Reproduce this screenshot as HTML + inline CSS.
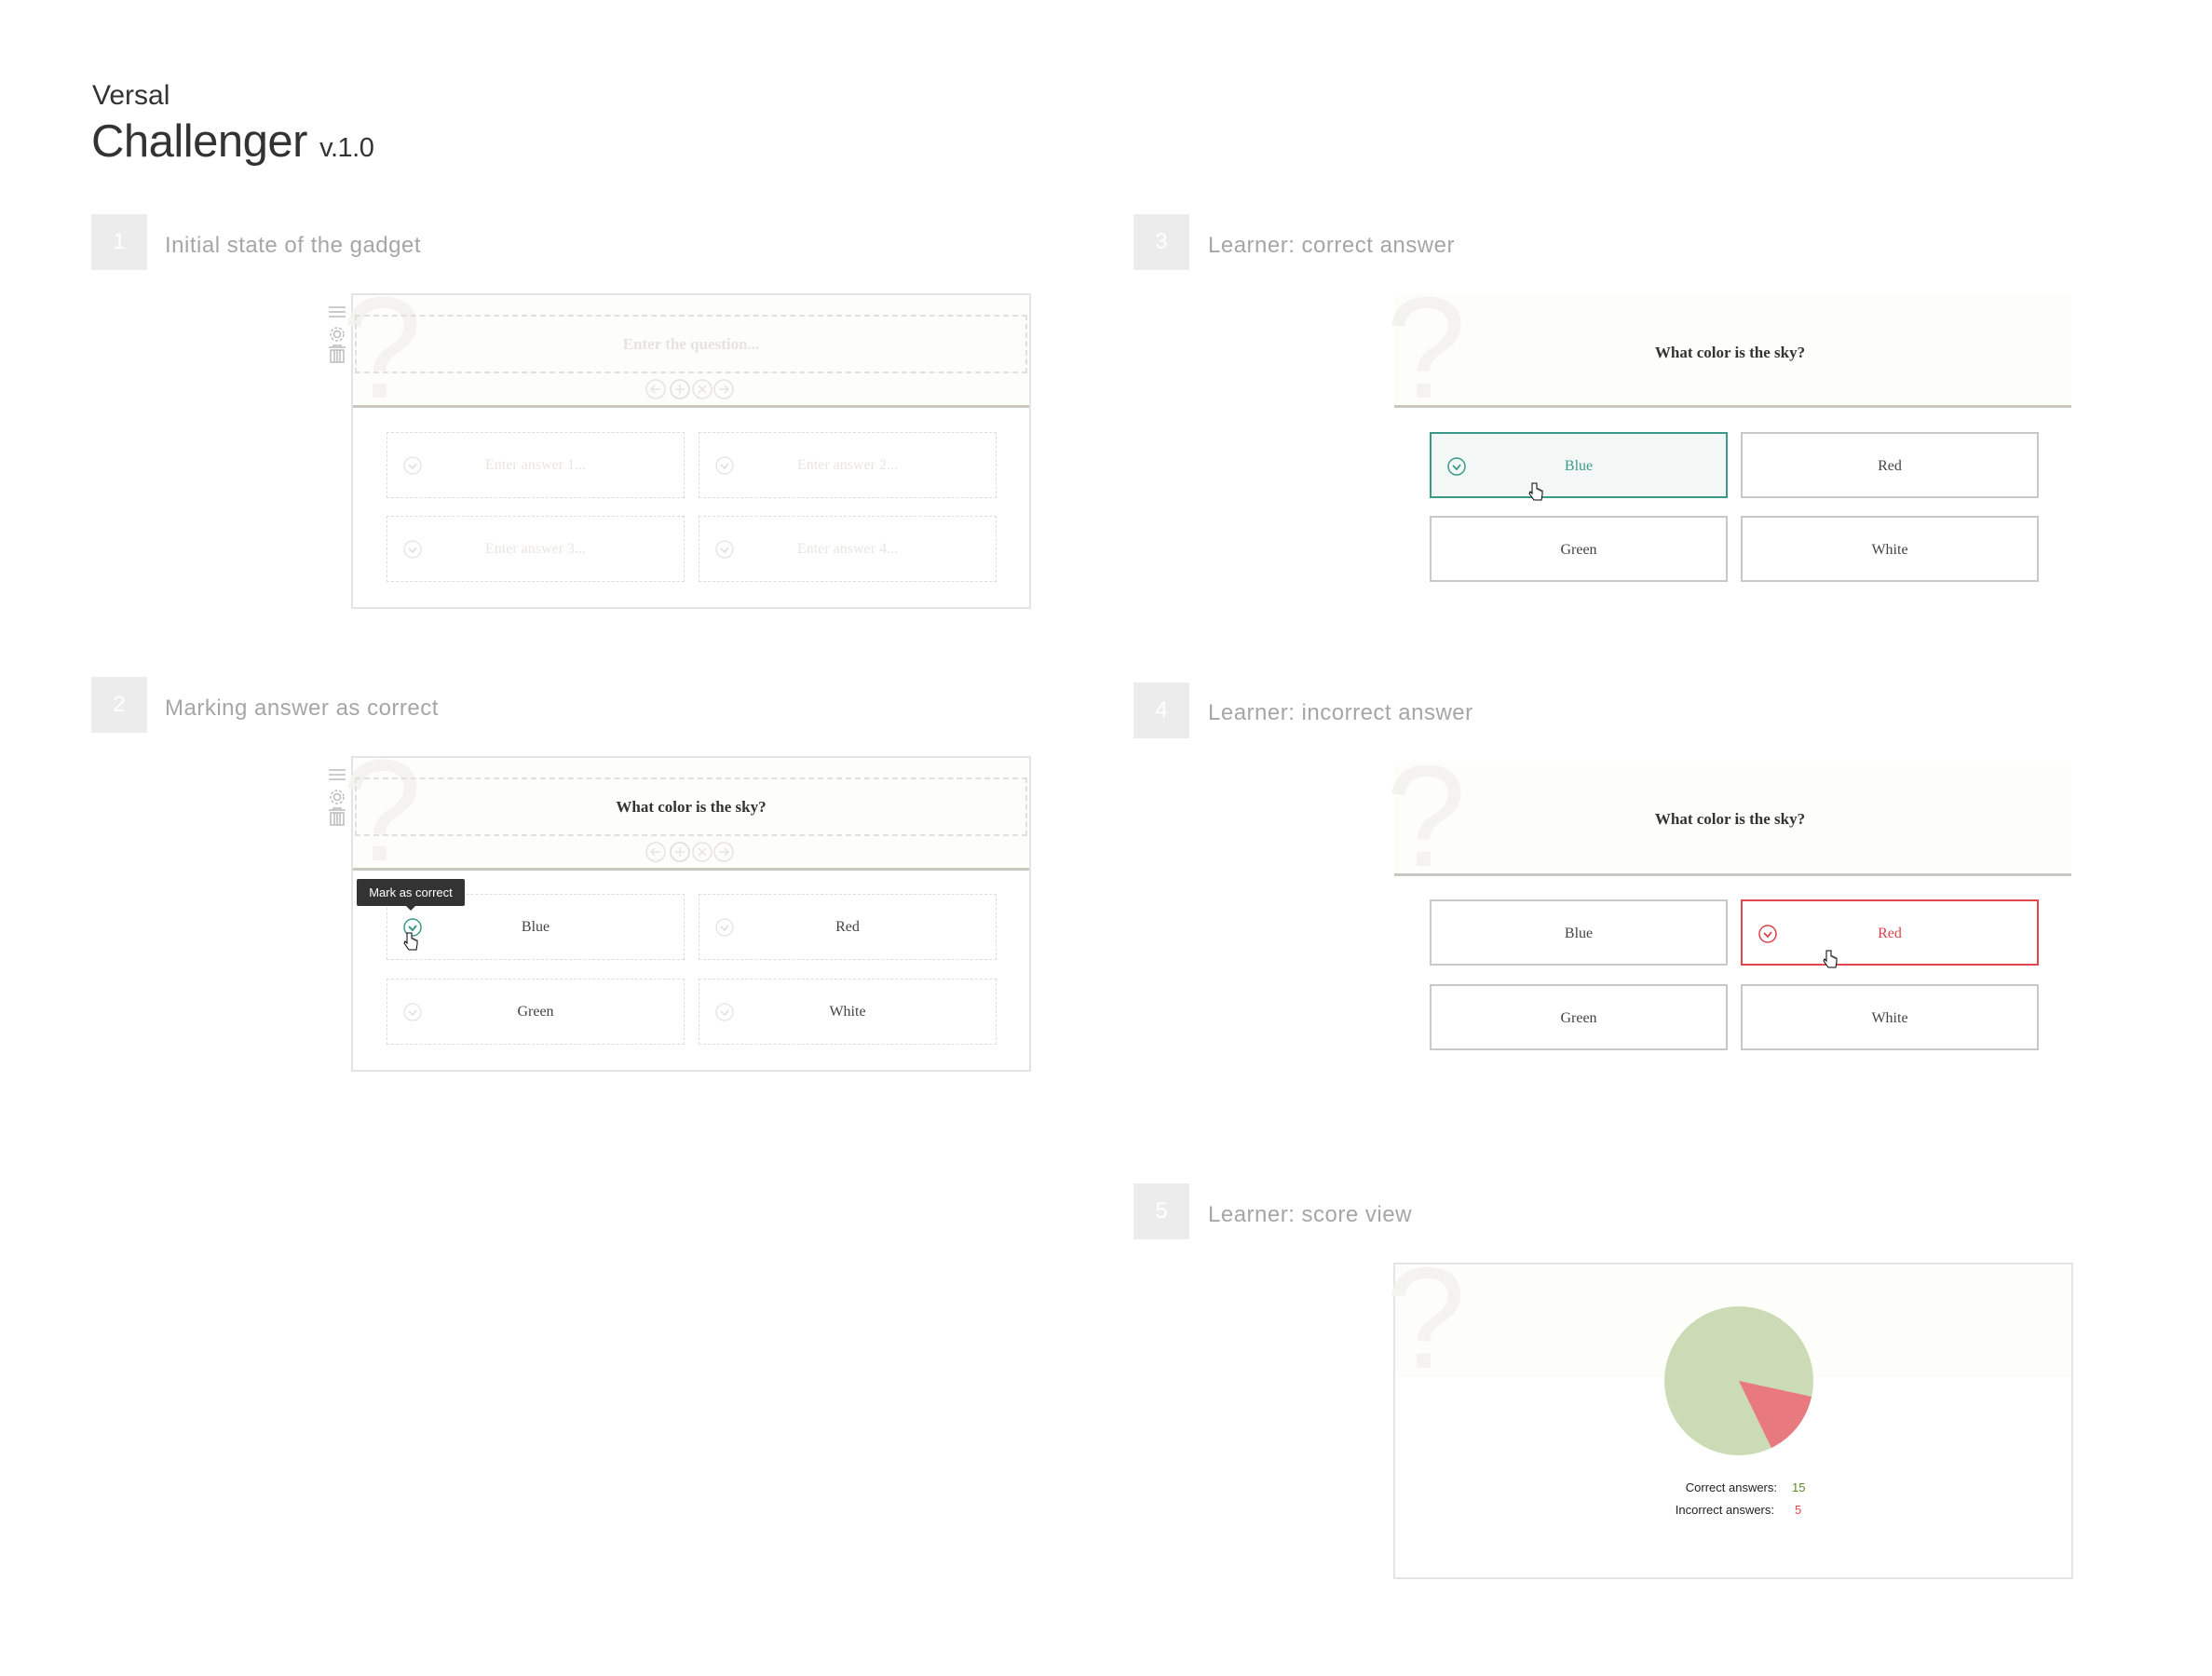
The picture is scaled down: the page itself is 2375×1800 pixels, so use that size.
<!DOCTYPE html>
<html><head><meta charset="utf-8"><style>
*{margin:0;padding:0;box-sizing:border-box}
body{width:2375px;height:1800px;background:#fff;position:relative;overflow:hidden;font-family:"Liberation Sans",sans-serif}
.a{position:absolute}
.badge{position:absolute;width:60px;height:60px;background:#ececec;color:#fff;font-size:24px;text-align:center;line-height:60px}
.lbl{position:absolute;font-size:24px;color:#a6a6a6;line-height:30px;letter-spacing:0.5px}
.cream{position:absolute;background:#fdfdf9}
.q{position:absolute;font-family:"Liberation Sans",sans-serif;color:#f4f3f0;font-size:155px;line-height:1}
.div{position:absolute;height:3px;background:#c9c7c0}
.qbox{position:absolute;border:2px dashed #e2e0da}
.qt{position:absolute;font-family:"Liberation Serif",serif;font-weight:bold;font-size:17px;text-align:center;color:#333}
.box{position:absolute;width:320px;height:71px;font-family:"Liberation Serif",serif;font-size:16px;color:#444;text-align:center;line-height:69px}
.dash{border:1.5px dashed #ddd}
.sol{border:2px solid #c8c8c8;background:#fff}
.chk{position:absolute;left:17px;top:25px}
.outer{position:absolute;border:2px solid #e4e4e4}
</style></head><body>

<div class="a" style="left:99px;top:86px;font-size:30px;color:#333">Versal</div>
<div class="a" style="left:98px;top:124px;font-size:49px;color:#333;letter-spacing:-0.5px">Challenger <span style="font-size:29px">v.1.0</span></div>

<div class="badge" style="left:98px;top:230px">1</div><div class="lbl" style="left:177px;top:249px">Initial state of the gadget</div>
<div class="badge" style="left:98px;top:727px">2</div><div class="lbl" style="left:177px;top:746px">Marking answer as correct</div>
<div class="badge" style="left:1217px;top:230px">3</div><div class="lbl" style="left:1297px;top:249px">Learner: correct answer</div>
<div class="badge" style="left:1217px;top:733px">4</div><div class="lbl" style="left:1297px;top:751px">Learner: incorrect answer</div>
<div class="badge" style="left:1217px;top:1271px">5</div><div class="lbl" style="left:1297px;top:1290px">Learner: score view</div>

<!-- Gadget 1 -->
<div class="outer" style="left:377px;top:315px;width:730px;height:339px"></div>
<div class="cream" style="left:379px;top:317px;width:726px;height:119px"></div>
<div class="q" style="left:367px;top:296px">?</div>
<div class="div" style="left:379px;top:435px;width:726px"></div>
<div class="qbox" style="left:381px;top:338px;width:722px;height:63px"></div>
<div class="qt" style="left:381px;top:360px;width:722px;color:#e6e4de">Enter the question...</div>
<svg class="a" style="left:691px;top:406px" width="100" height="26"><g fill="none" stroke="#e6e4de" stroke-width="1.5"><circle cx="13" cy="12" r="10"/><circle cx="39" cy="12" r="10" stroke="#ddd"/><circle cx="63" cy="12" r="10"/><circle cx="86" cy="12" r="10"/><path d="M18 12H8M12 8l-4 4 4 4M39 7v10M34 12h10M59 8l8 8M67 8l-8 8M81 12h10M87 8l4 4-4 4"/></g></svg>
<svg class="a" style="left:350px;top:327px" width="24" height="70"><g fill="none" stroke="#bbb" stroke-width="1.5"><path d="M3 3h18M3 8h18M3 13h18"/><circle cx="12" cy="32" r="3.5"/><circle cx="12" cy="32" r="7" stroke-dasharray="3 2"/><path d="M3 46h18M8 46v-2h8v2M5 49h14v13H5zM9 49v13M12 49v13M15 49v13"/></g></svg>
<div class="box dash" style="left:415px;top:464px;color:#e8e6e0"><svg class="chk" width="20" height="20"><circle cx="10" cy="10" r="9" fill="none" stroke="#e4e4e4" stroke-width="1.3"/><path d="M6 9l4 4 4-5" fill="none" stroke="#ddd" stroke-width="1.5"/></svg>Enter answer 1...</div>
<div class="box dash" style="left:750px;top:464px;color:#e8e6e0"><svg class="chk" width="20" height="20"><circle cx="10" cy="10" r="9" fill="none" stroke="#e4e4e4" stroke-width="1.3"/><path d="M6 9l4 4 4-5" fill="none" stroke="#ddd" stroke-width="1.5"/></svg>Enter answer 2...</div>
<div class="box dash" style="left:415px;top:554px;color:#e8e6e0"><svg class="chk" width="20" height="20"><circle cx="10" cy="10" r="9" fill="none" stroke="#e4e4e4" stroke-width="1.3"/><path d="M6 9l4 4 4-5" fill="none" stroke="#ddd" stroke-width="1.5"/></svg>Enter answer 3...</div>
<div class="box dash" style="left:750px;top:554px;color:#e8e6e0"><svg class="chk" width="20" height="20"><circle cx="10" cy="10" r="9" fill="none" stroke="#e4e4e4" stroke-width="1.3"/><path d="M6 9l4 4 4-5" fill="none" stroke="#ddd" stroke-width="1.5"/></svg>Enter answer 4...</div>

<!-- Gadget 2 -->
<div class="outer" style="left:377px;top:812px;width:730px;height:339px"></div>
<div class="cream" style="left:379px;top:814px;width:726px;height:119px"></div>
<div class="q" style="left:367px;top:793px">?</div>
<div class="div" style="left:379px;top:932px;width:726px"></div>
<div class="qbox" style="left:381px;top:835px;width:722px;height:63px"></div>
<div class="qt" style="left:381px;top:857px;width:722px">What color is the sky?</div>
<svg class="a" style="left:691px;top:903px" width="100" height="26"><g fill="none" stroke="#e6e4de" stroke-width="1.5"><circle cx="13" cy="12" r="10"/><circle cx="39" cy="12" r="10" stroke="#ddd"/><circle cx="63" cy="12" r="10"/><circle cx="86" cy="12" r="10"/><path d="M18 12H8M12 8l-4 4 4 4M39 7v10M34 12h10M59 8l8 8M67 8l-8 8M81 12h10M87 8l4 4-4 4"/></g></svg>
<svg class="a" style="left:350px;top:824px" width="24" height="70"><g fill="none" stroke="#bbb" stroke-width="1.5"><path d="M3 3h18M3 8h18M3 13h18"/><circle cx="12" cy="32" r="3.5"/><circle cx="12" cy="32" r="7" stroke-dasharray="3 2"/><path d="M3 46h18M8 46v-2h8v2M5 49h14v13H5zM9 49v13M12 49v13M15 49v13"/></g></svg>
<div class="box dash" style="left:415px;top:960px"><svg class="chk" width="20" height="20"><circle cx="10" cy="10" r="9" fill="none" stroke="#3a9a8a" stroke-width="1.5"/><path d="M6 9l4 4 4-5" fill="none" stroke="#3a9a8a" stroke-width="2"/></svg>Blue</div>
<div class="box dash" style="left:750px;top:960px"><svg class="chk" width="20" height="20"><circle cx="10" cy="10" r="9" fill="none" stroke="#e4e4e4" stroke-width="1.3"/><path d="M6 9l4 4 4-5" fill="none" stroke="#ddd" stroke-width="1.5"/></svg>Red</div>
<div class="box dash" style="left:415px;top:1051px"><svg class="chk" width="20" height="20"><circle cx="10" cy="10" r="9" fill="none" stroke="#e4e4e4" stroke-width="1.3"/><path d="M6 9l4 4 4-5" fill="none" stroke="#ddd" stroke-width="1.5"/></svg>Green</div>
<div class="box dash" style="left:750px;top:1051px"><svg class="chk" width="20" height="20"><circle cx="10" cy="10" r="9" fill="none" stroke="#e4e4e4" stroke-width="1.3"/><path d="M6 9l4 4 4-5" fill="none" stroke="#ddd" stroke-width="1.5"/></svg>White</div>
<div class="a" style="left:383px;top:944px;width:116px;height:29px;background:#333;border-radius:2px;color:#fff;font-size:13px;line-height:29px;text-align:center">Mark as correct</div>
<div class="a" style="left:436px;top:973px;width:0;height:0;border-left:5px solid transparent;border-right:5px solid transparent;border-top:5px solid #333"></div>
<svg class="a" style="left:433px;top:1000px" width="16" height="22"><path d="M4 2v11l-2-2-1 2 5 7h8l1-6v-4h-2v-1h-2v-1h-2V2z" fill="#fff" stroke="#000" stroke-width="1"/></svg>

<!-- Gadget 3 -->
<div class="cream" style="left:1497px;top:315px;width:727px;height:121px"></div>
<div class="q" style="left:1488px;top:296px">?</div>
<div class="div" style="left:1497px;top:435px;width:727px"></div>
<div class="qt" style="left:1494px;top:369px;width:727px">What color is the sky?</div>
<div class="box sol" style="left:1535px;top:464px;border-color:#3a9a8a;background:#f3f8f6;color:#3a9a8a"><svg class="chk" width="20" height="20"><circle cx="10" cy="10" r="9" fill="none" stroke="#3a9a8a" stroke-width="1.5"/><path d="M6 9l4 4 4-5" fill="none" stroke="#3a9a8a" stroke-width="1.8"/></svg>Blue</div>
<div class="box sol" style="left:1869px;top:464px">Red</div>
<div class="box sol" style="left:1535px;top:554px">Green</div>
<div class="box sol" style="left:1869px;top:554px">White</div>
<svg class="a" style="left:1641px;top:517px" width="16" height="22"><path d="M4 2v11l-2-2-1 2 5 7h8l1-6v-4h-2v-1h-2v-1h-2V2z" fill="#fff" stroke="#000" stroke-width="1"/></svg>

<!-- Gadget 4 -->
<div class="cream" style="left:1497px;top:818px;width:727px;height:121px"></div>
<div class="q" style="left:1488px;top:799px">?</div>
<div class="div" style="left:1497px;top:938px;width:727px"></div>
<div class="qt" style="left:1494px;top:870px;width:727px">What color is the sky?</div>
<div class="box sol" style="left:1535px;top:966px">Blue</div>
<div class="box sol" style="left:1869px;top:966px;border-color:#e0484e;color:#d9434a"><svg class="chk" width="20" height="20"><circle cx="10" cy="10" r="9" fill="none" stroke="#d9434a" stroke-width="1.5"/><path d="M6 9l4 4 4-5" fill="none" stroke="#d9434a" stroke-width="1.8"/></svg>Red</div>
<div class="box sol" style="left:1535px;top:1057px">Green</div>
<div class="box sol" style="left:1869px;top:1057px">White</div>
<svg class="a" style="left:1957px;top:1019px" width="16" height="22"><path d="M4 2v11l-2-2-1 2 5 7h8l1-6v-4h-2v-1h-2v-1h-2V2z" fill="#fff" stroke="#000" stroke-width="1"/></svg>

<!-- Gadget 5 -->
<div class="outer" style="left:1496px;top:1356px;width:730px;height:340px"></div>
<div class="cream" style="left:1498px;top:1358px;width:726px;height:121px"></div>
<div class="q" style="left:1488px;top:1338px">?</div>
<svg class="a" style="left:1785px;top:1401px" width="164" height="164"><circle cx="82" cy="82" r="80" fill="#cadbb5"/><path d="M82 82L160 99A80 80 0 0 1 117 154Z" fill="#e8797e"/></svg>
<div class="a" style="left:1676px;top:1590px;width:232px;text-align:right;font-size:13px;color:#222">Correct answers:</div>
<div class="a" style="left:1924px;top:1590px;font-size:13px;color:#5a8a2a">15</div>
<div class="a" style="left:1676px;top:1614px;width:229px;text-align:right;font-size:13px;color:#222">Incorrect answers:</div>
<div class="a" style="left:1927px;top:1614px;font-size:13px;color:#e0484e">5</div>
</body></html>
